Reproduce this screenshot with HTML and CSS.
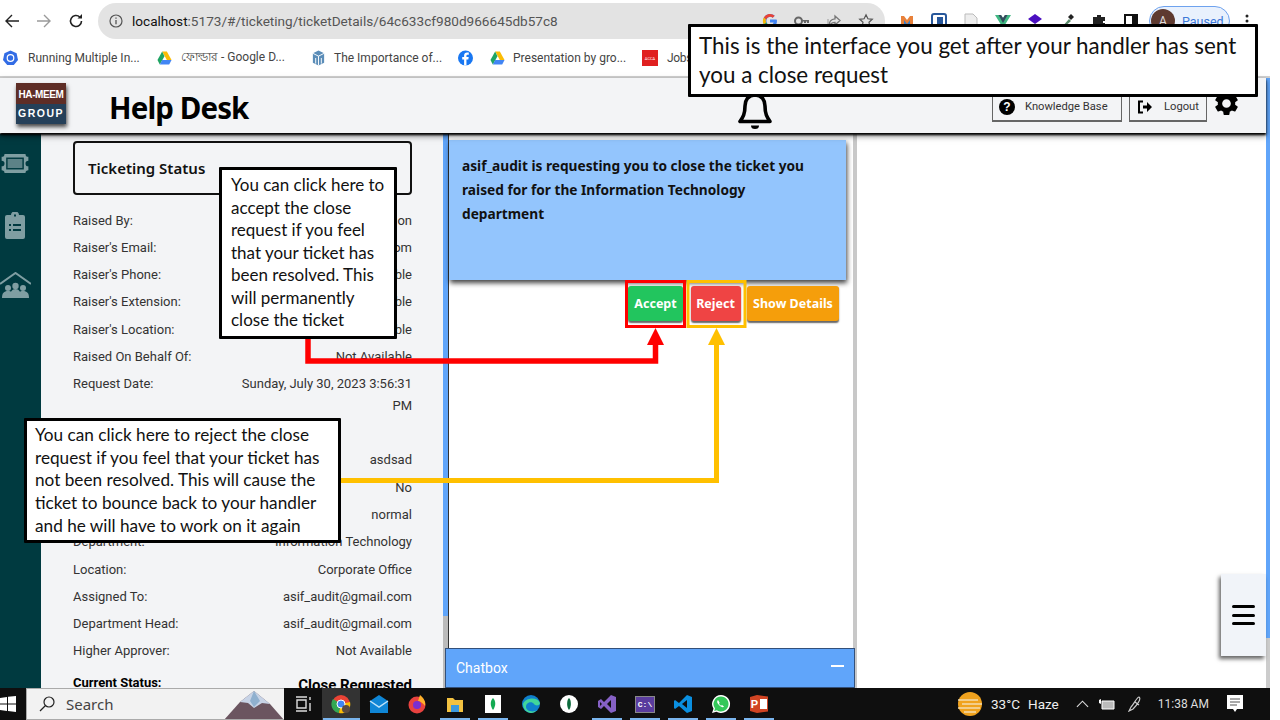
FILE: index.html
```html
<!DOCTYPE html>
<html lang="en">
<head>
<meta charset="utf-8">
<title>Help Desk</title>
<link rel="stylesheet" href="styles.css">
</head>
<body>
<div class="page">
  <div class="chrome-bar">
    <div class="nav">
      <svg class="nav-ico" viewBox="0 0 16 16"><path d="M15 8H2M8 2L2 8l6 6" fill="none" stroke="#222" stroke-width="1.4"/></svg>
      <svg class="nav-ico" viewBox="0 0 16 16"><path d="M1 8h13M8 2l6 6-6 6" fill="none" stroke="#9a9a9a" stroke-width="1.4"/></svg>
      <svg class="nav-ico" viewBox="0 0 16 16"><path d="M13.5 8A5.5 5.5 0 1 1 11.8 4" fill="none" stroke="#222" stroke-width="1.6"/><path d="M9.5 5.5H14V1z" fill="#222"/></svg>
    </div>
    <div class="omni">
      <svg class="info" viewBox="0 0 14 14"><circle cx="7" cy="7" r="6" fill="none" stroke="#555" stroke-width="1.2"/><path d="M7 6v4.2M7 3.6v1.2" stroke="#555" stroke-width="1.3"/></svg>
      <span class="url"><b class="host">localhost</b>:5173/#/ticketing/ticketDetails/64c633cf980d966645db57c8</span>
      <span class="omni-tools">
        <svg class="tool" viewBox="0 0 16 16"><path d="M14.5 6.6H8v2.9h3.7c-.5 1.7-1.9 2.6-3.7 2.6A4.2 4.2 0 0 1 8 3.8c1 0 2 .4 2.7 1l2-2A7 7 0 1 0 8 15c3.800 0 7-2.800 7-7 0-.5 0-1-.5-1.400z" fill="#4285f4"/><path d="M1.800 4.600L4.200 6.400A4.200 4.200 0 0 1 8 3.800c1 0 2 .4 2.700 1l2-2A7 7 0 0 0 1.800 4.600z" fill="#ea4335"/><path d="M1.800 11.400L4.200 9.600A4 4 0 0 1 4 6.400L1.800 4.600a7 7 0 0 0 0 6.800z" fill="#fbbc05"/><path d="M8 15a7 7 0 0 1-6.200-3.600l2.400-1.800A4.200 4.200 0 0 0 8 12.100c1 0 1.800-.3 2.500-.8l2.300 1.800A7 7 0 0 1 8 15z" fill="#34a853"/></svg>
        <svg class="tool" viewBox="0 0 16 16"><circle cx="4.500" cy="8" r="3.500" fill="none" stroke="#666" stroke-width="2"/><path d="M8 7h7v3h-2v-1.500h-1V10h-2V8.500H8z" fill="#666"/></svg>
        <svg class="tool" viewBox="0 0 16 16"><path d="M9 3l5 4.500L9 12V9.300C6 9.300 4.500 10.500 3 13c0-4.500 2.500-7 6-7.200z" fill="none" stroke="#777" stroke-width="1.300"/><path d="M2 6v8h9" fill="none" stroke="#999"/></svg>
        <svg class="tool" viewBox="0 0 16 16"><path d="M8 1.800l1.900 4 4.400.5-3.300 3 .9 4.400L8 11.500l-3.900 2.200.9-4.400-3.300-3 4.400-.5z" fill="none" stroke="#555" stroke-width="1.200"/></svg>
      </span>
    </div>
    <div class="ext-list">
      <svg class="ext" viewBox="0 0 16 16"><path d="M2 3h3l3 4 3-4h3v11H2z" fill="#e8813a"/><path d="M5 14V7l3 4 3-4v7z" fill="#3f7fc4"/></svg>
      <svg class="ext" viewBox="0 0 16 16"><rect x="1" y="1" width="14" height="14" rx="2" fill="#fff" stroke="#27579b" stroke-width="2"/><rect x="6" y="4" width="6" height="8" fill="#27579b"/></svg>
      <svg class="ext" viewBox="0 0 16 16"><path d="M2 1h8l4 4v10H2z" fill="#eee" stroke="#bbb"/></svg>
      <svg class="ext" viewBox="0 0 16 16"><path d="M0 2h6l2 3 2-3h6L8 15z" fill="#41b883"/><path d="M3.500 2H6l2 3 2-3h2.500L8 10z" fill="#35495e"/></svg>
      <svg class="ext" viewBox="0 0 16 16"><path d="M8 1l7 5-7 5-7-5z" fill="#4b0fc0"/><path d="M8 12h8v2H8z" fill="#7a5fc0"/></svg>
      <svg class="ext" viewBox="0 0 16 16"><path d="M3 14l7-8 2 2-8 7z" fill="#5a8a6a"/><path d="M9 4l3-3 3 3-3 3z" fill="#222"/></svg>
      <svg class="ext" viewBox="0 0 16 16"><path d="M6 2h4v2h4v4h-2v2h2v4H2V4h4z" fill="#222"/></svg>
      <svg class="ext" viewBox="0 0 16 16"><path d="M2 2h12v12H2z" fill="none" stroke="#111" stroke-width="2"/><path d="M9 2h5v12H9z" fill="#111"/></svg>
      <span class="profile"><span class="avatar">A</span><span class="paused">Paused</span></span>
      <svg class="dots" viewBox="0 0 4 16"><circle cx="2" cy="3" r="1.500"/><circle cx="2" cy="8" r="1.500"/><circle cx="2" cy="13" r="1.500"/></svg>
    </div>
  </div>

  <div class="bookmarks">
    <span class="bm bm-1"><svg class="bm-ico" viewBox="0 0 16 16"><path d="M8 0l6.500 3 1.500 7-4.500 5.500h-7L0 10l1.500-7z" fill="#326ce5"/><circle cx="8" cy="8" r="3.500" fill="none" stroke="#fff" stroke-width="1.300"/></svg>Running Multiple In...</span>
    <span class="bm bm-2"><svg class="bm-ico" viewBox="0 0 16 16"><path d="M5.500 1h5l5 9h-5z" fill="#fbbc05"/><path d="M5.500 1l-5 9L3 15l5-9z" fill="#1fa463"/><path d="M3 15h10l2.500-5H5.500z" fill="#4285f4"/></svg>ফোল্ডার - Google D...</span>
    <span class="bm bm-3"><svg class="bm-ico" viewBox="0 0 16 16"><path d="M8 0l6 3v10l-6 3-6-3V3z" fill="#5b8db8"/><path d="M2 3l6 3 6-3M8 6v10M5 8v6M11 8v6" fill="none" stroke="#fff"/></svg>The Importance of...</span>
    <span class="bm bm-4"><svg class="bm-ico" viewBox="0 0 16 16"><circle cx="8" cy="8" r="8" fill="#1877f2"/><path d="M9 16V9.500h2l.4-2.500H9V5.600c0-.8.3-1.200 1.300-1.200h1.200V2.200C11 2.100 10.400 2 9.700 2 7.700 2 6.500 3.200 6.500 5.300V7H4.500v2.500h2V16z" fill="#fff"/></svg></span>
    <span class="bm bm-5"><svg class="bm-ico" viewBox="0 0 16 16"><path d="M5.500 1h5l5 9h-5z" fill="#fbbc05"/><path d="M5.500 1l-5 9L3 15l5-9z" fill="#1fa463"/><path d="M3 15h10l2.500-5H5.500z" fill="#4285f4"/></svg>Presentation by gro...</span>
    <span class="bm bm-6"><span class="acca">ACCA</span>Jobs</span>
  </div>

  <div class="app">
    <div class="app-main">
      <header class="app-header">
        <div class="logo"><span class="logo-top">HA-MEEM</span><span class="logo-bottom">GROUP</span></div>
        <h1 class="brand">Help Desk</h1>
        <svg class="bell" viewBox="0 0 34 38"><path d="M17 3C10 3 7 8.500 7 14c0 8-2 11-5 15.500h30C29 25 27 22 27 14c0-5.500-3-11-10-11z" fill="none" stroke="#000" stroke-width="3.600" stroke-linejoin="round"/><path d="M13 33.500h8a4 3.500 0 0 1-8 0z" fill="#000"/></svg>
        <a class="hbtn hbtn-kb"><svg class="hbtn-ico" viewBox="0 0 16 16"><circle cx="8" cy="8" r="8" fill="#000"/><text x="8" y="12" text-anchor="middle" class="q">?</text></svg>Knowledge Base</a>
        <a class="hbtn hbtn-out"><svg class="hbtn-ico" viewBox="0 0 16 16"><path d="M6 2.500H2v11h4" fill="none" stroke="#000" stroke-width="2"/><path d="M6 6.500h4V3l5 5-5 5V9.500H6z" fill="#000"/></svg>Logout</a>
        <svg class="gear" viewBox="0 0 24 24"><path d="M19.140 12.940c.04-.3.06-.61.06-.94 0-.32-.02-.64-.07-.94l2.030-1.580a.49.49 0 0 0 .12-.61l-1.920-3.320a.488.488 0 0 0-.59-.22l-2.390.96c-.5-.38-1.030-.7-1.620-.94l-.36-2.540a.484.484 0 0 0-.48-.41h-3.840c-.24 0-.43.17-.47.41l-.36 2.540c-.59.24-1.130.57-1.620.94l-2.390-.96c-.22-.08-.47 0-.59.22L2.740 8.870c-.12.21-.08.47.12.61l2.030 1.580c-.05.3-.09.63-.09.94s.02.64.07.94l-2.030 1.580a.49.49 0 0 0-.12.61l1.920 3.320c.12.22.37.29.59.22l2.390-.96c.5.38 1.030.7 1.620.94l.36 2.540c.05.24.24.41.48.41h3.840c.24 0 .44-.17.47-.41l.36-2.540c.59-.24 1.130-.56 1.620-.94l2.390.96c.22.08.47 0 .59-.22l1.920-3.320c.12-.22.07-.47-.12-.61l-2.010-1.580zM12 15.600c-1.980 0-3.600-1.620-3.600-3.600s1.620-3.600 3.600-3.600 3.600 1.620 3.600 3.600-1.620 3.600-3.600 3.600z" fill="#000"/></svg>
      </header>
      <div class="app-body">
        <nav class="sidebar">
          <svg class="side-ticket" viewBox="0 0 30 22"><path d="M4 1h22a3 3 0 0 0 3 3v4a3 3 0 0 0 0 6v4a3 3 0 0 0-3 3H4a3 3 0 0 0-3-3v-4a3 3 0 0 0 0-6V4a3 3 0 0 0 3-3z" fill="#7f9ea2"/><rect x="6.500" y="5.500" width="17" height="11" fill="#5d8287" stroke="#003a40" stroke-width="1.500"/></svg>
          <svg class="side-clip" viewBox="0 0 20 27"><path d="M2 3h4a4 3.500 0 0 1 8 0h4a2 2 0 0 1 2 2v20a2 2 0 0 1-2 2H2a2 2 0 0 1-2-2V5a2 2 0 0 1 2-2z" fill="#7f9ea2"/><path d="M4 12h2v2H4zM8 12h8v2H8zM4 17h2v2H4zM8 17h8v2H8zM9 2.500h2v2H9z" fill="#003a40"/></svg>
          <svg class="side-home" viewBox="0 0 31 27"><path d="M0 12L15.500 1 31 12" fill="none" stroke="#7f9ea2" stroke-width="2"/><circle cx="8" cy="16" r="3" fill="#7f9ea2"/><circle cx="23" cy="16" r="3" fill="#7f9ea2"/><circle cx="15.500" cy="14" r="3.200" fill="#7f9ea2"/><path d="M2 26c0-5 2-7 6-7s6 2 6 7zM17 26c0-5 2-7 6-7s6 2 6 7zM10 26c0-6 2-9 5.500-9s5.500 3 5.500 9z" fill="#7f9ea2"/></svg>
        </nav>
        <section class="details">
          <div class="status-card">Ticketing Status</div>
          <div class="row"><span>Raised By:</span><span>Not Available on</span></div>
          <div class="row"><span>Raiser's Email:</span><span>asif_audit@gmail.com</span></div>
          <div class="row"><span>Raiser's Phone:</span><span>Not Available</span></div>
          <div class="row"><span>Raiser's Extension:</span><span>Not Available</span></div>
          <div class="row"><span>Raiser's Location:</span><span>Not Available</span></div>
          <div class="row"><span>Raised On Behalf Of:</span><span>Not Available</span></div>
          <div class="row"><span>Request Date:</span><span class="wrap">Sunday, July 30, 2023 3:56:31 PM</span></div>
          <div class="row"><span>Subject:</span><span></span></div>
          <div class="row"><span>Description:</span><span>asdsad</span></div>
          <div class="row"><span>Approval Required:</span><span>No</span></div>
          <div class="row"><span>Priority:</span><span>normal</span></div>
          <div class="row"><span>Department:</span><span>Information Technology</span></div>
          <div class="row"><span>Location:</span><span>Corporate Office</span></div>
          <div class="row"><span>Assigned To:</span><span>asif_audit@gmail.com</span></div>
          <div class="row"><span>Department Head:</span><span>asif_audit@gmail.com</span></div>
          <div class="row"><span>Higher Approver:</span><span>Not Available</span></div>
          <div class="row row-status"><span>Current Status:</span><span class="status-val">Close Requested</span></div>
        </section>
        <div class="bar-left"></div>
        <section class="center">
          <div class="notice">asif_audit is requesting you to close the ticket you raised for for the Information Technology department</div>
          <div class="actions">
            <button class="act act-accept">Accept</button>
            <button class="act act-reject">Reject</button>
            <button class="act act-details">Show Details</button>
          </div>
        </section>
        <div class="bar-center"></div>
        <section class="right"></section>
        <div class="chatbox"><span>Chatbox</span><i class="minus"></i></div>
        <div class="menu-btn"><i></i><i></i><i></i></div>
      </div>
    </div>
    <div class="bar-page"></div>
  </div>

  <footer class="taskbar">
    <svg class="win" viewBox="0 0 16 16"><path d="M0 2l7-1v6.500H0zM8 .8L16 0v7.500H8zM0 8.500h7V15l-7-1zM8 8.500h8V16l-8-1z" fill="#fff"/></svg>
    <div class="search">
      <svg class="search-ico" viewBox="0 0 16 16"><circle cx="10" cy="6" r="5" fill="none" stroke="#222" stroke-width="1.200"/><path d="M6.500 9.500L1 15" stroke="#222" stroke-width="1.300"/></svg>
      <span class="search-text">Search</span>
      <svg class="mountain" viewBox="0 0 60 32"><path d="M0 32L16 14 30 3l16 13 14 16z" fill="#6b5560"/><path d="M16 14L30 3l16 13-8-1-8 5-6-5z" fill="#c7d3e6"/><path d="M30 3l6 10-6 6-4-6z" fill="#8fb0cf"/></svg>
    </div>
    <span class="slot"><svg class="tb" viewBox="0 0 20 20"><path d="M3 3h11M3 17h11M4 6h9v8H4zM17 3v3M17 9v8" fill="none" stroke="#ddd" stroke-width="1.400"/></svg></span>
    <span class="slot slot-active"><svg class="tb" viewBox="0 0 20 20"><circle cx="10" cy="10" r="9" fill="#ea4335"/><path d="M10 10L2 5a9 9 0 0 0 6 14z" fill="#34a853"/><path d="M10 10l9-2a9 9 0 0 1-11 11z" fill="#fbbc05"/><circle cx="10" cy="10" r="4" fill="#4285f4" stroke="#fff"/><circle cx="15" cy="15" r="4" fill="#5a4a42"/></svg></span>
    <span class="slot"><svg class="tb" viewBox="0 0 20 20"><path d="M1 7l9-6 9 6v12H1z" fill="#0f86d6"/><path d="M1 7l9 6 9-6" fill="none" stroke="#bfe3fa" stroke-width="1.500"/></svg></span>
    <span class="slot"><svg class="tb" viewBox="0 0 20 20"><circle cx="10" cy="11" r="8.500" fill="#e8423f"/><path d="M13 1c4 3 6 7 5 11-2-3-5-5-7-5z" fill="#ffb12b"/><circle cx="10" cy="11" r="4" fill="#7a2fd0"/></svg></span>
    <span class="slot slot-on"><svg class="tb" viewBox="0 0 20 20"><path d="M2 4h6l2 2h8v12H2z" fill="#f3c241"/><path d="M6 11h8v7H6z" fill="#3c9adf"/></svg></span>
    <span class="slot slot-on"><svg class="tb" viewBox="0 0 20 20"><path d="M2 1h16v18H2z" fill="#fff"/><path d="M10 4c3 3 3 8 0 12-3-4-3-9 0-12z" fill="#13aa52"/></svg></span>
    <span class="slot"><svg class="tb" viewBox="0 0 20 20"><circle cx="10" cy="10" r="9" fill="#0f7fcc"/><path d="M2 10c2-6 14-8 17-1 0 3-5 3-6 1-2-3-8-2-8 3 0 4 7 6 11 3-5 6-14 2-14-6z" fill="#41d59a"/></svg></span>
    <span class="slot"><svg class="tb" viewBox="0 0 20 20"><circle cx="10" cy="10" r="9" fill="#fff"/><path d="M10 4c2.500 2 2.500 9 0 12-2.500-3-2.500-10 0-12z" fill="#0c6b3c"/></svg></span>
    <span class="slot slot-on"><svg class="tb" viewBox="0 0 20 20"><path d="M14 1l5 2v14l-5 2-7-7-3 3-3-2V7l3-2 3 3zM14 6l-4 4 4 4zM3 8v4l2-2z" fill="#8661c5"/></svg></span>
    <span class="slot slot-on"><span class="cmd">C:\</span></span>
    <span class="slot slot-on"><svg class="tb" viewBox="0 0 20 20"><path d="M14 1l5 2v14l-5 2-8-7-4 3-1-1V7l1-1 4 3zM14 6L9 10l5 4z" fill="#0a8fe0"/></svg></span>
    <span class="slot slot-on"><svg class="tb" viewBox="0 0 20 20"><path d="M10 1a9 9 0 0 0-7.500 13.800L1 19l4.400-1.300A9 9 0 1 0 10 1z" fill="#fff"/><path d="M10 2.500a7.500 7.500 0 0 0-6 12l-.8 2.500 2.600-.8A7.500 7.500 0 1 0 10 2.500z" fill="#34c759"/><path d="M7 6c-1.500 1-1 3 1 5s4 3 5 1.500l-2-1.500-1 .7c-1-.5-1.500-1.200-2-2l.6-1z" fill="#fff"/></svg></span>
    <span class="slot slot-on"><svg class="tb" viewBox="0 0 20 20"><path d="M8 1l11 1.500v15L8 19 1 17V3z" fill="#d04423"/><path d="M11 5h7v10h-7z" fill="#fff"/><text x="5.500" y="14" class="p">P</text></svg></span>
    <div class="tray">
      <svg class="sun" viewBox="0 0 24 24"><circle cx="12" cy="12" r="12" fill="#f0a21e"/><path d="M0 8h20M4 12h20M0 16h22M6 20h12" stroke="#f3dcae" stroke-width="1.500"/></svg>
      <span class="weather">33°C</span><span class="weather weather-2">Haze</span>
      <svg class="chev" viewBox="0 0 14 8"><path d="M1 7l6-6 6 6" fill="none" stroke="#ddd" stroke-width="1.200"/></svg>
      <svg class="batt" viewBox="0 0 16 12"><path d="M3 3h12v8H3z" fill="#bbb" stroke="#fff"/><path d="M0 2v3l2 1V1z" fill="#fff"/></svg>
      <svg class="pen" viewBox="0 0 14 16"><path d="M11 1c3 2-3 9-6 12L1 15l2-4c3-3 6-10 8-10zM7 6l4 3" fill="none" stroke="#ccc" stroke-width="1.200"/></svg>
      <span class="clock">11:38 AM</span>
      <svg class="note" viewBox="0 0 16 18"><path d="M0 0h16v14H10l-2 3-2-3H0z" fill="#fff"/><path d="M3 4h10M3 7h10M3 10h7" stroke="#555"/></svg>
    </div>
  </footer>

  <svg class="arrows" viewBox="0 0 1270 720">
    <path d="M308 336V361H655.500V340" fill="none" stroke="#f00" stroke-width="5.500"/>
    <path d="M647 345L655.500 328 664 345z" fill="#f00"/>
    <path d="M340 480.500H716.500V340" fill="none" stroke="#ffc000" stroke-width="5"/>
    <path d="M708 345L716.500 328 725 345z" fill="#ffc000"/>
    <rect x="626.500" y="281.500" width="58" height="45" fill="none" stroke="#f00" stroke-width="3"/>
    <rect x="688" y="281.500" width="57" height="45" fill="none" stroke="#ffc000" stroke-width="3"/>
  </svg>
  <div class="callout callout-top">This is the interface you get after your handler has sent<br>you a close request</div>
  <div class="callout callout-accept">You can click here to<br>accept the close<br>request if you feel<br>that your ticket has<br>been resolved. This<br>will permanently<br>close the ticket</div>
  <div class="callout callout-reject">You can click here to reject the close<br>request if you feel that your ticket has<br>not been resolved. This will cause the<br>ticket to bounce back to your handler<br>and he will have to work on it again</div>
</div>
</body>
</html>
```

FILE: styles.css
```css
* { box-sizing: border-box; }
html, body { margin: 0; height: 720px; overflow: hidden; background: #fff; }
body { font-family: "Roboto", "Noto Sans", "Noto Sans CJK SC", sans-serif; color: #333; }
.page { position: relative; width: 1270px; height: 720px; display: flex; flex-direction: column; overflow: hidden; background: #fff; }

/* browser chrome */
.chrome-bar { height: 38px; display: flex; align-items: flex-start; background: #fff; flex: none; }
.nav { width: 98px; display: flex; gap: 16px; padding: 13px 0 0 4px; }
.nav-ico { width: 16px; height: 16px; }
.omni { width: 787px; height: 36px; margin-top: 3px; background: #e3e3e3; border-radius: 18px 18px 0 18px; display: flex; align-items: center; padding-left: 11px; }
.info { width: 14px; height: 14px; margin-right: 9px; }
.url { font: 13.600px "Roboto", sans-serif; color: #555; white-space: nowrap; }
.host { font-weight: 400; color: #111; }
.omni-tools { margin-left: auto; display: flex; gap: 16px; padding-right: 11px; }
.tool { width: 16px; height: 16px; }
.ext-list { flex: 1; display: flex; align-items: center; height: 34px; padding-left: 14px; gap: 16px; margin-top: 4px; }
.ext { width: 16px; height: 16px; flex: none; }
.profile { width: 81px; height: 30px; border: 1.500px solid #6ea2ee; border-radius: 15px; background: #e9f1fd; display: flex; align-items: center; gap: 7px; padding-left: 1px; flex: none; margin-left: -6px; }
.avatar { width: 24px; height: 24px; border-radius: 50%; background: #5e3a30; color: #ddd; font-size: 12px; display: flex; align-items: center; justify-content: center; }
.paused { font: 12.500px "Roboto", sans-serif; color: #3d78d8; }
.dots { width: 4px; height: 16px; margin-left: -1px; flex: none; fill: #222; }

.bookmarks { height: 40px; flex: none; border-bottom: 2px solid #d0d0d0; display: flex; align-items: center; font: 12px "Roboto", "Noto Sans", sans-serif; color: #444; white-space: nowrap; padding-top: 2px; }
.bm { display: flex; align-items: center; gap: 9px; flex: none; }
.bm-ico { width: 15px; height: 16px; flex: none; }
.bm-1 { margin-left: 3px; width: 154px; gap: 10px; }
.bm-2 { width: 154px; }
.bm-3 { width: 147px; gap: 8px; }
.bm-4 { width: 32px; }
.bm-5 { width: 152px; gap: 8px; }
.bm-6 { letter-spacing: -.3px; }
.acca { width: 16px; height: 16px; background: #e02020; color: #fff; font-size: 4px; letter-spacing: 0; display: flex; align-items: center; justify-content: center; }

/* app */
.app { flex: none; height: 610px; display: flex; }
.app-main { width: 1266px; display: flex; flex-direction: column; }
.bar-page { width: 4px; background: linear-gradient(#60a5fa 560px, #ccc 560px); }
.app-header { position: relative; z-index: 2; height: 55px; flex: none; background: #f3f4f6; box-shadow: 0 2px 2px #000, 0 3px 6px rgba(0,0,0,.5); display: flex; align-items: flex-start; }
.logo { width: 50px; height: 41px; margin: 5px 0 0 16px; display: flex; flex-direction: column; flex: none; box-shadow: 1px 3px 4px rgba(0,0,0,.7); font-family: "Liberation Sans", sans-serif; color: #fff; text-align: center; white-space: nowrap; overflow: hidden; }
.logo-top { height: 21px; background: #5e2d26; font-weight: 700; font-size: 10px; line-height: 23px; letter-spacing: -.4px; }
.logo-bottom { height: 20px; background: #254059; font-weight: 700; font-size: 10.500px; line-height: 19px; letter-spacing: 1.500px; }
.brand { margin: 8px 0 0 43px; width: 139px; flex: none; font-family: "Noto Sans", sans-serif; font-size: 29.500px; line-height: 44px; font-weight: 700; color: #000; letter-spacing: -.9px; white-space: nowrap; }
.bell { width: 34px; height: 38px; margin: 14px 0 0 490px; flex: none; }
.hbtn { width: 130px; height: 28px; margin: 16px 0 0 220px; border: 1px solid #666; border-bottom-width: 2px; display: flex; align-items: center; padding: 0 0 2px 6px; gap: 10px; font: 11.200px "Roboto", sans-serif; color: #333; flex: none; }
.hbtn-out { width: 78px; margin-left: 7px; padding-left: 7px; gap: 11px; }
.hbtn-ico { width: 16px; height: 16px; flex: none; }
.q { font: 700 12px "Liberation Sans", sans-serif; fill: #fff; }
.gear { width: 29px; height: 29px; margin: 11px 0 0 5px; flex: none; }
.app-body { position: relative; flex: 1; display: flex; min-height: 0; margin-top: 1px; }
.sidebar { width: 41px; flex: none; background: #003a40; display: flex; flex-direction: column; align-items: flex-start; padding-top: 19px; overflow: hidden; }
.side-ticket { width: 30px; height: 21px; }
.side-clip { width: 20px; height: 27px; margin: 38px 0 0 5px; }
.side-home { width: 31px; height: 27px; margin: 33px 0 0 0; }

.details { width: 402px; flex: none; background: #f3f4f6; padding: 7px 31px 0 32px; overflow: hidden; font-size: 13px; line-height: 21.500px; }
.status-card { height: 54px; border: 2px solid #111; border-radius: 4px; background: #f3f4f6; margin-bottom: 14.500px; padding: 2px 0 0 13px; display: flex; align-items: center; font-family: "Noto Sans", sans-serif; font-size: 15px; font-weight: 600; color: #111; }
.row { display: flex; justify-content: space-between; margin-bottom: 5.800px; min-height: 21.500px; }
.row span:last-child { text-align: right; }
.wrap { max-width: 176px; }
.row-status { margin-top: 10px; color: #000; font-weight: 700; }
.status-val { font-size: 15px; padding-top: 3px; }
.bar-left { width: 5px; flex: none; background: linear-gradient(#60a5fa 482px, #bbb 482px); }
.center { width: 405px; flex: none; background: #fff; border-left: 1px solid #333; padding: 6px 7px 0 0; }
.notice { height: 140px; background: #93c5fd; box-shadow: 1px 3px 5px rgba(0,0,0,.75); padding: 14px 36px 14px 13px; font-family: "Noto Sans", sans-serif; font-size: 13.700px; font-weight: 700; line-height: 24px; color: #111; }
.actions { display: flex; justify-content: flex-end; gap: 6.500px; margin-top: 6px; padding-right: 7px; }
.act { height: 35px; border: 0; border-radius: 3px; color: #fff; font: 700 12.500px "Noto Sans", sans-serif; box-shadow: 0 1.500px 1.500px rgba(0,0,0,.6); padding: 0; }
.act-accept { width: 55px; background: #22c55e; margin-right: 1px; }
.act-reject { width: 50px; background: #ef4444; }
.act-details { width: 92px; background: #f59e0b; }
.bar-center { width: 4px; flex: none; background: #c8c8c8; }
.right { flex: 1; background: #fff; }
.chatbox { position: absolute; left: 445px; bottom: 0; width: 410px; height: 40px; background: #60a5fa; border: 1px solid #33507a; display: flex; align-items: center; justify-content: space-between; padding: 0 10px; color: #fff; font-size: 14px; }
.minus { width: 13px; height: 2px; background: #fff; margin-bottom: 4px; }
.menu-btn { position: absolute; right: 0; top: 440px; width: 45px; height: 82px; background: #f1f4f9; box-shadow: -2px 3px 4px rgba(0,0,0,.6); display: flex; flex-direction: column; justify-content: center; align-items: center; gap: 5.500px; }
.menu-btn i { width: 23px; height: 3px; border-radius: 2px; background: #000; }

/* taskbar */
.taskbar { flex: none; height: 32px; background: #0f0f0f; display: flex; align-items: stretch; position: relative; z-index: 3; }
.win { width: 16px; height: 16px; margin: 8px 10px 0 0; flex: none; }
.search { width: 258px; background: #f2f2f2; border: 1px solid #aaa; border-width: 1px 0 1px 1px; display: flex; align-items: center; overflow: hidden; padding-left: 12px; font-family: "Noto Sans", sans-serif; font-size: 15px; color: #444; position: relative; }
.search-ico { width: 16px; height: 16px; flex: none; }
.search-text { margin-left: 11px; }
.mountain { margin-left: auto; width: 60px; height: 32px; flex: none; }
.slot { width: 38px; display: flex; align-items: center; justify-content: center; position: relative; flex: none; }
.slot-on::after, .slot-active::after { content: ""; position: absolute; left: 4px; right: 4px; bottom: 0; height: 2px; background: #7ab5ee; }
.slot-active { background: #333; }
.slot-active::after { left: 1px; right: 0; }
.tb { width: 20px; height: 20px; }
.p { font: 700 11px "Liberation Sans", sans-serif; fill: #fff; text-anchor: middle; }
.cmd { width: 20px; height: 17px; background: #5a3c9e; border: 1px solid #888; color: #fff; font: 700 8px "Liberation Mono", monospace; display: flex; align-items: center; justify-content: center; }
.tray { display: flex; align-items: center; margin-left: 180px; font-size: 14px; color: #ddd; flex: none; }
.sun { width: 24px; height: 24px; margin-right: 9px; }
.weather { font: 13.500px "Roboto", sans-serif; color: #eee; }
.weather-2 { margin-left: 8px; }
.chev { width: 13px; height: 8px; margin-left: 17px; }
.batt { width: 16px; height: 12px; margin-left: 10px; }
.pen { width: 14px; height: 16px; margin-left: 13px; }
.clock { margin-left: 16px; font: 12px "Roboto", sans-serif; color: #ddd; }
.note { width: 16px; height: 18px; margin-left: 18px; }

/* annotations */
.arrows { position: absolute; left: 0; top: 0; width: 1270px; height: 720px; z-index: 4; pointer-events: none; }
.callout { position: absolute; z-index: 5; background: #fff; border: 3.500px solid #000; border-radius: 1px; color: #111; font-family: "Lato", sans-serif; white-space: nowrap; }
.callout-top { left: 688px; top: 24px; width: 570px; height: 73px; padding: 4px 8px; font-size: 22.400px; line-height: 29px; }
.callout-accept { left: 219px; top: 167px; width: 178px; height: 172px; padding: 4px 9px; font-size: 17px; line-height: 22.500px; }
.callout-reject { left: 24px; top: 418px; width: 317px; height: 125px; padding: 3px 8px; font-size: 17.200px; line-height: 22.700px; }
```
